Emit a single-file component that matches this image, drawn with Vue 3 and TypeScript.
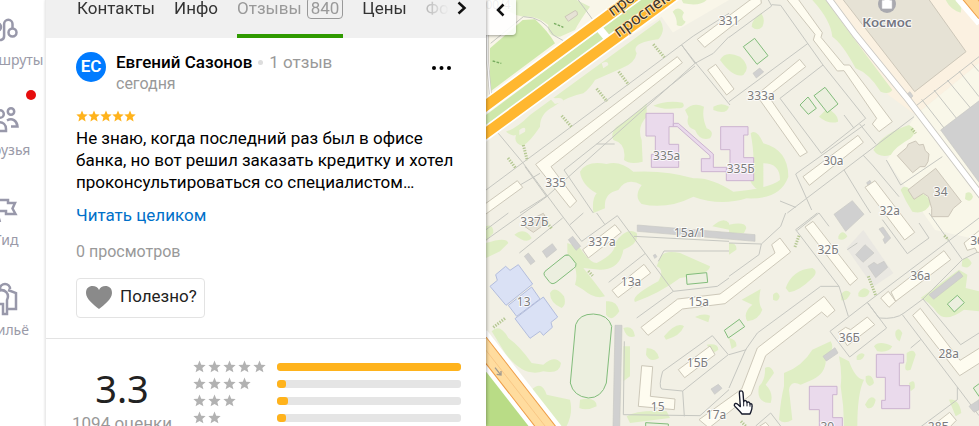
<script setup lang="ts">
interface Label { x: number; y: number; text: string }
interface Tile {
  x: number
  y: number
  greens: string
  lines: string
  hedges: string
  houses: string
  fields: string
  greys: string
}

const tabs = ['Контакты', 'Инфо', 'Отзывы', 'Цены', 'Фото']
const activeTab = 'Отзывы'
const reviewCount = 840

const ratings = [
  { stars: 5, share: 100 },
  { stars: 4, share: 5 },
  { stars: 3, share: 6 },
  { stars: 2, share: 5 },
]

const starPath = 'M6 0.5 7.6 4.3 11.7 4.6 8.6 7.3 9.6 11.4 6 9.2 2.4 11.4 3.4 7.3 0.3 4.6 4.4 4.3Z'

const tiles: Tile[] = [
  {
    x: 0,
    y: 0,
    greens: `M78 395Q110 385 150 345L540 60Q560 90 535 118Q450 128 470 160Q465 190 425 205Q380 225 345 240Q330 265 310 280Q260 290 220 320Q180 340 180 380Q150 425 128 438Q100 430 108 405Q95 410 78 395Z
      M18 0H290L330 20Q300 60 285 90L240 110Q200 110 205 75Q170 45 130 50L108 45Z
      M578 35Q595 15 612 38Q600 55 617 65Q605 85 590 75Q592 55 578 35Z
      M610 10Q660 20 680 0H605Z
      M500 310L500 350Q470 380 485 420L488 485Q450 495 432 480Q440 430 400 420Q390 400 410 380Q460 350 500 310Z
      M520 317Q560 300 608 308Q620 325 590 325Q550 330 520 317Z
      M615 330Q640 305 672 320Q665 350 680 385Q705 395 690 415Q660 425 645 390Q615 380 625 350Z
      M700 320Q725 305 747 320Q740 345 700 330Z
      M300 515Q320 480 380 492Q420 480 460 515Q560 510 640 535Q690 530 760 575Q870 565 900 540Q900 490 850 490L850 570Q820 570 810 540Q830 500 812 400Q830 385 850 430Q925 450 925 530Q900 600 800 595Q720 620 640 590Q560 630 485 612Q460 590 485 555Q440 530 415 570Q370 580 375 625L340 639Q335 595 350 580Q305 555 300 515Z
      M720 180Q735 150 780 170Q815 200 790 225Q760 235 720 180Z`,
    lines: `M18 570L640 108L747 40 M18 615L180 520 M55 400L130 490L240 639 M120 639L205 585L645 190L605 135L640 180L750 315 M645 190L700 160L747 110 M350 432H404 M340 639L252 510L645 198 M135 500L200 590L18 720 M295 0L350 75 M32 130L130 50Q190 50 220 105L255 125`,
    hedges: 'M520 133L553 172 M416 215L446 254 M350 266L381 304 M245 347L276 382 M130 435L142 482 M84 474L106 503',
    houses: `M167 493L592 170 607 188 213 500 290 603 270 623Z M-10 630L112 542 128 562 0 655Z
      M652 118L810 0 842 -10 844 10 674 142Z M683 210L707 193 762 267 740 285Z`,
    fields: '',
    greys: '',
  },
  {
    x: 747,
    y: 0,
    greens: `M250 0H290L345 75Q400 150 490 270Q480 285 455 275Q420 220 380 205Q340 130 310 110Q305 60 250 0Z
      M68 80Q70 55 97 40Q110 60 100 80Q85 95 68 80Z
      M270 350L295 325Q330 345 327 365Q300 375 270 350Z
      M433 450Q460 400 540 375Q570 390 545 415Q500 440 485 465Q450 475 433 450Z
      M515 570Q525 550 545 570Q600 580 605 610Q590 645 550 635Q530 605 515 570Z
      M710 580Q725 570 732 590Q725 610 708 597Z
      M650 0H690Q700 20 695 38Q665 30 650 0Z`,
    lines: `M0 112L128 18L118 0 M128 14L155 16L282 195L410 355L277 460L153 295L282 195 M0 305L237 130 M175 639L555 350 M200 522L408 373 M200 522L248 630 M345 345L375 385 M392 372L441 433 M345 510L400 600L425 639 M402 465L430 495L510 590 M472 480L515 555L640 470 M153 603L200 622`,
    hedges: 'M548 386L560 400',
    houses: `M170 -6L258 103 253 120 325 213 345 212 443 355 430 372 450 395 490 365 362 195 345 195 276 112 280 98 205 -6Z
      M82 285L212 178 230 200 118 288 235 457 213 470Z M222 530L387 406 403 427 241 556Z
      M408 562L438 542 557 697 527 720Z`,
    fields: 'M43 140L77 115 117 167 84 193Z M213 315L237 291 262 325 238 343Z M255 287L288 262 327 312 295 338Z',
    greys: `M72 220L92 204 104 216 82 234Z M635 390L760 295V560Z M530 285L543 275 552 288 541 299Z
      M413 548L423 541 428 552 418 558Z M315 643L370 602 405 643 350 694Z`,
  },
  {
    x: 0,
    y: 639,
    greens: `M18 90Q80 70 85 90L60 115 18 135Z M103 65Q135 40 155 75Q140 95 103 65Z M18 40Q40 30 40 60L18 85Z
      M262 90L300 105Q330 150 350 150Q410 120 405 90Q440 40 470 60Q480 90 430 110Q420 170 360 170L310 165Q350 215 375 250Q345 260 310 230L285 215Q300 170 262 120Z
      M210 240Q225 215 252 250Q260 275 245 285Q210 270 210 240Z M378 265Q410 260 418 295Q395 330 378 305Z
      M540 135Q550 110 600 120L690 160Q690 185 600 195Q540 240 465 267Q450 250 535 205Q555 170 530 160Z
      M35 355Q60 330 85 375Q120 400 155 450L190 455Q225 425 243 450Q240 485 190 475Q130 495 75 420Z
      M155 530Q185 500 200 545L270 560Q280 600 260 639H220Z M430 345Q460 335 465 370Q440 380 430 345Z
      M430 400H450V490L430 505Z M500 405Q530 405 537 435Q510 450 498 425Z
      M552 370Q590 325 612 340Q600 370 558 380Z M300 560Q350 550 350 580Q320 595 298 585Z
      M440 610Q470 590 560 595L570 615 450 630Z M645 312Q670 300 690 308L685 328Z M680 395Q715 390 715 410L700 420Z M697 40Q730 10 747 30V50Z`,
    lines: `M18 50L85 0 M118 120L248 15 M240 0L305 85L412 8 M412 8L580 235L712 220L747 195 M386 208L495 122 M462 70L747 85 M535 145L552 114H747 M580 235L470 315 M433 385L430 605L660 608L747 530 M697 368L745 425L608 534L613 610 M608 534L545 528Q535 520 548 475L697 368 M350 0L375 35 M270 35L310 0`,
    hedges: 'M40 343L75 316 M325 174L338 188 M202 30L214 46',
    houses: `M308 110L405 35 424 58 325 135Z M396 232L492 154 512 180 414 254Z
      M483 343L593 258 720 243 885 120 875 95 900 75 932 117 735 272 607 288 504 367Z
      M485 458L518 461 511 550 585 558 583 590 475 580Z M595 470L690 399 705 425 614 494Z`,
    fields: `M287 335Q298 303 340 303Q385 305 395 340L379 510Q365 555 325 555Q280 550 271 510Z
      M195 175L255 127Q268 122 275 135L288 152Q290 162 280 167L228 208Q215 217 207 205L193 187Q190 180 195 175Z
      M619 185L680 179 683 208 621 214Z M497 645V629L565 633V645Z M733 352L778 319 794 341 745 375Z`,
    greys: `M472 36L825 65V85L472 55Z M405 337H426L419 645H399Z M187 115L217 92 230 110 200 134Z
      M265 80L278 70 302 100 288 112Z M133 130L145 120 165 145 152 155Z M693 528L715 514 726 526 704 544Z M520 127L526 124 531 131 524 136Z`,
  },
  {
    x: 747,
    y: 639,
    greens: `M0 35Q50 25 52 45L45 60H0Z M0 90Q25 90 22 110L0 125Z
      M170 225Q190 170 250 165Q270 175 250 195Q210 235 180 238Z M132 245Q145 230 152 250Q148 270 132 260Z
      M38 260L95 228Q85 270 100 290Q90 320 55 325Q40 300 70 275Z M0 375Q25 380 22 400L8 408Z
      M335 245Q350 225 365 240Q355 265 337 262Z M388 240Q405 215 422 235Q415 260 388 250Z
      M328 70Q340 45 355 70Q345 85 328 78Z M500 355Q510 340 520 360L512 385Q495 375 500 355Z
      M165 480Q220 460 250 410L305 385Q320 410 290 430Q295 480 250 500L215 515Q185 500 180 530L190 620Q165 635 150 620Q155 560 165 520Z
      M330 430L360 445Q380 500 405 500Q385 540 385 639H345Q345 580 335 520Q340 480 330 430Z
      M108 465Q125 455 135 480L110 515Q135 540 125 570Q80 570 90 520Q110 500 108 465Z
      M383 430Q395 415 407 425Q400 445 383 440Z M435 400Q450 380 490 400Q480 420 445 415Z
      M533 420Q555 405 560 425L545 470Q520 480 533 445Z M540 510Q560 495 557 525L545 535Z
      M410 490Q430 480 435 510Q420 530 410 505Z M408 575Q425 540 440 560Q435 590 415 585Z
      M575 255L690 170 715 185 710 225 750 235V295L705 290Q650 330 625 300Q600 265 575 255Z
      M700 140Q715 125 728 150Q720 170 698 160Z M660 560Q690 555 697 600L680 610Z`,
    lines: `M0 90L97 93L155 40L170 0 M97 93L90 125L0 190 M200 50L265 0 M200 50L330 220L358 310 M330 220H275L85 360L50 410L0 525 M0 425L52 410 M303 355L415 268L473 345L362 432Z M415 268L450 315Q500 320 525 300L582 258L700 140L600 0 M520 305L685 522L750 608 M582 258L695 395L750 360 M685 522V560L550 660 M545 405L575 380 M205 52L270 0L300 40 M460 20L535 122L600 75L570 30 M415 268L750 15 M80 639L125 600L155 639 M700 140L750 115 M355 110L385 90`,
    hedges: 'M210 68L197 104 M418 190L440 247 M646 68L658 80 M36 625L50 639',
    houses: `M228 42L252 25 386 197 363 217Z M486 237L645 113 665 140 500 265Z M455 255L478 235 500 265 480 283Z
      M328 358L350 343 365 350 415 312 437 335 355 398Z M551 307L574 286 693 442 760 400V445L692 488Z
      M705 90L760 45V118L745 118 738 105 715 112Z M595 650L662 598 682 622 655 650Z
      M-90 620L38 528 85 405 285 250 318 292 295 312 278 297 110 428 66 545 -60 645Z M75 650L110 628 125 645Z`,
    fields: 'M655 273L685 247 706 269 676 297Z M760 505L733 525 750 550Z',
    greys: `M282 430L318 404 327 420 292 444Z M600 245L690 175 702 190 614 259Z M380 125L408 95 435 120 402 148Z
      M417 160L435 148 445 155 465 145 476 163 440 194Z M450 48L462 42 485 75 468 92 462 80 468 72Z M720 580L750 560V590L735 598Z`,
  },
]

const houseLabels: Label[] = [
  { x: 747, y: 76, text: '331' }, { x: 560, y: 480, text: '335а' }, { x: 227, y: 562, text: '335' },
  { x: 782, y: 520, text: '335Б' }, { x: 843, y: 300, text: '333а' }, { x: 1060, y: 495, text: '30а' },
  { x: 1382, y: 588, text: '34' }, { x: 1229, y: 645, text: '32а' }, { x: 163, y: 677, text: '337Б' },
  { x: 366, y: 738, text: '337а' }, { x: 629, y: 711, text: '15а/1' }, { x: 453, y: 859, text: '13а' },
  { x: 656, y: 919, text: '15а' }, { x: 131, y: 919, text: '13' }, { x: 652, y: 1101, text: '15Б' },
  { x: 533, y: 1233, text: '15' }, { x: 708, y: 1258, text: '17а' }, { x: 1044, y: 762, text: '32Б' },
  { x: 1321, y: 841, text: '36а' }, { x: 1108, y: 1027, text: '36Б' }, { x: 1406, y: 1073, text: '28а' },
  { x: 1491, y: 735, text: '36' }, { x: 1375, y: 1292, text: '28Б' }, { x: 1042, y: 1294, text: '30' },
]

function shift(tile: Tile): string {
  return `translate(${tile.x} ${tile.y})`
}
</script>

<template>
  <div class="app">
    <nav class="rail" aria-label="Разделы">
      <div class="rail-inner">
        <a class="rail-item" href="#">
          <svg class="rail-icon" viewBox="0 0 28 28" aria-hidden="true">
            <circle cx="19.500" cy="16.500" r="4" />
            <circle cx="4" cy="11" r="4" />
            <path d="M19.500 12.500V8a4.200 4.200 0 0 0-8.400 0V20a4 4 0 0 1-7.500 2V15" />
          </svg>
          <span>Маршруты</span>
        </a>
        <a class="rail-item" href="#">
          <svg class="rail-icon" viewBox="0 0 28 28" aria-hidden="true">
            <circle cx="7" cy="8" r="3.800" />
            <circle cx="18" cy="5.500" r="3.200" />
            <path d="M0 25v-2c0-9 13-9 13 0v2zM14 14.500c5-3 10 0 10.500 6H18" />
          </svg>
          <i class="dot"></i>
          <span>Друзья</span>
        </a>
        <a class="rail-item" href="#">
          <svg class="rail-icon" viewBox="0 0 28 28" aria-hidden="true">
            <path d="M1 4H15V7H22L19.500 12.500 22.500 18H13V15H3M4 16l3 10" />
          </svg>
          <span>Гид</span>
        </a>
        <a class="rail-item" href="#">
          <svg class="rail-icon" viewBox="0 0 28 28" aria-hidden="true">
            <path d="M7 3a5 5 0 0 1 10 0M5 5c7-3 12 3 9 9V28H10V18H5M15 4 23 7V23H15" />
          </svg>
          <span>Жильё</span>
        </a>
      </div>
    </nav>

    <main class="panel">
      <header class="tabs">
        <nav class="tab-list">
          <a v-for="tab in tabs" :key="tab" href="#" class="tab" :class="{ active: tab === activeTab }">
            {{ tab }}<span v-if="tab === activeTab" class="count">{{ reviewCount }}</span>
          </a>
        </nav>
        <button class="tab-next" type="button" aria-label="Вперёд">
          <svg width="10" height="14" viewBox="0 0 10 14"><path d="M1.500 1.500 7.500 7l-6 5.500" /></svg>
        </button>
      </header>

      <article class="review">
        <div class="author">
          <div class="avatar">ЕС</div>
          <div class="who">
            <div class="name-line"><b class="name">Евгений Сазонов</b><i class="sep"></i><span>1 отзыв</span></div>
            <div class="date">сегодня</div>
          </div>
          <button class="more" type="button" aria-label="Ещё">
            <svg width="20" height="6" viewBox="0 0 20 6">
              <circle cx="3" cy="3" r="2" /><circle cx="10.500" cy="3" r="2" /><circle cx="18" cy="3" r="2" />
            </svg>
          </button>
        </div>
        <div class="score">
          <svg v-for="n in 5" :key="n" viewBox="0 0 12 12"><path :d="starPath" /></svg>
        </div>
        <p class="body">
          Не знаю, когда последний раз был в офисе<br />банка, но вот решил заказать кредитку и хотел<br />проконсультироваться со специалистом…
        </p>
        <a class="read-all" href="#">Читать целиком</a>
        <div class="views">0 просмотров</div>
        <button class="useful" type="button">
          <svg width="26" height="24" viewBox="0 0 26 24">
            <path d="M13 23C8 19 0 13 0 7 0 2 3 0 6.500 0 9.500 0 12 1.500 13 4c1-2.500 3.500-4 6.500-4C23 0 26 2 26 7c0 6-8 12-13 16Z" />
          </svg>
          Полезно?
        </button>
      </article>

      <section class="summary">
        <div class="total">
          <div class="average">3.3</div>
          <div class="votes">1094 оценки</div>
        </div>
        <ul class="rows">
          <li v-for="row in ratings" :key="row.stars" class="row">
            <span class="row-stars">
              <svg v-for="n in row.stars" :key="n" viewBox="0 0 12 12"><path :d="starPath" /></svg>
            </span>
            <span class="track"><span class="fill" :style="{ width: row.share + '%' }"></span></span>
          </li>
        </ul>
      </section>
    </main>

    <section class="map">
      <svg class="map-canvas" viewBox="18 0 1479 1278" preserveAspectRatio="xMinYMin slice" role="img" aria-label="Карта">
        <rect x="0" y="0" width="1600" height="1300" fill="#f2f0e5" />
        <path d="M18 0H747L540 120 18 510Z" fill="#f9f6e9" />
        <path d="M18 390 545 50 605 135 18 570Z" fill="#f2f0e5" />
        <path d="M1047 0H1497V190L1307 345 1225 285Z" fill="#fbf1e1" />
        <path d="M1307 345 1497 190V720L1365 690 1220 480Z" fill="#f9f7e9" />
        <path d="M1100 745 1150 690 1240 820 1180 860Z" fill="#eae8e2" />

        <g class="green"><path v-for="(t, i) in tiles" :key="i" :d="t.greens" :transform="shift(t)" /></g>
        <path d="M30 275V145L128 60 165 58Q205 95 225 130Z" fill="#cfe9ab" />
        <path d="M18 345 480 0H530L18 380Z" fill="#cfe8ab" />
        <path d="M18 1110 150 1278H18Z" fill="#b9dc86" />
        <path d="M225 295Q250 290 250 305L225 312 205 290Z M365 190Q385 180 385 195L370 205Z M118 390Q140 375 135 395L118 405Z" fill="#f2f0e5" />

        <g class="line"><path v-for="(t, i) in tiles" :key="i" :d="t.lines" :transform="shift(t)" /></g>
        <path class="line" d="M1325 298 1467 480M1362 270 1497 440M1402 240 1497 355M1437 213 1497 290M1475 190 1497 215M1305 320 1497 170" />
        <path d="M22 105V180L32 290" fill="none" stroke="#c9c6c2" stroke-width="8" />
        <path d="M22 105V180L32 290" fill="none" stroke="#fff" stroke-width="4" />

        <g class="hedge"><path v-for="(t, i) in tiles" :key="i" :d="t.hedges" :transform="shift(t)" /></g>
        <path d="M222 70 250 82M38 183 64 190" fill="none" stroke="#78ad60" stroke-width="4" stroke-dasharray="8 4" />
        <g class="grey"><path v-for="(t, i) in tiles" :key="i" :d="t.greys" :transform="shift(t)" /></g>
        <g class="field"><path v-for="(t, i) in tiles" :key="i" :d="t.fields" :transform="shift(t)" /></g>

        <g class="public">
          <path d="M1087-4H1345L1458 155 1304 275Z" />
          <path d="M1252 467 1280 443 1285 432 1307 423 1317 435 1330 433 1336 452 1347 462 1344 485 1335 500 1320 500 1298 518Z" />
          <path d="M1284 570 1367 505 1444 605 1420 625 1405 650H1355L1355 625 1345 590 1330 580 1302 598Z" />
          <path d="M135 680 170 650 190 640 205 665 160 697Z M255 50 285 32Q293 32 292 45L265 64Z" />
        </g>
        <g class="house"><path v-for="(t, i) in tiles" :key="i" :d="t.houses" :transform="shift(t)" /></g>
        <g class="school">
          <path d="M498 340H580V380H567V433H596V502H514V463H526V408H498Z" />
          <path d="M580 370H595L700 462V502H740V515H664V476H690V467L592 380H580Z" />
          <path d="M722 380H804V405H791V473H821V542H739V505H750V449H722Z" />
          <path d="M1189 1063H1271V1089H1258V1157H1289V1226H1205V1201H1216V1132H1189Z" />
          <path d="M988 1159H1071V1184H1058V1253H1087V1290H1018V1229H988Z" />
        </g>
        <g class="office">
          <path d="M30 859 52 841 47 824 77 799 90 811 115 794 158 852 78 916Z" />
          <path d="M85 916 155 861 180 897 110 949Z" />
          <path d="M105 956 190 891 233 951 213 967 217 982 190 1006 180 994 150 1015Z" />
        </g>

        <g fill="none">
          <path d="M1040-12 1127 105 1287 302 1510 595" stroke="#c9c7c1" stroke-width="21" />
          <path d="M1040-12 1127 105 1287 302 1510 595" stroke="#fff" stroke-width="16" />
          <path d="M1445-15 1510 60" stroke="#fff" stroke-width="50" />
          <path d="M1460-15 1510 45" stroke="#ef9d45" stroke-width="38" />
          <path d="M1460-15 1510 45" stroke="#ffd797" stroke-width="32" />
          <path d="M-10 337 476-20M-10 420 590-20" stroke="#fff" stroke-width="41" />
          <path d="M353 80 380 112" stroke="#fff" stroke-width="22" />
          <path d="M-10 337 476-20M-10 420 590-20" stroke="#ffb72f" stroke-width="31" />
          <path d="M-10 1015 220 1310" stroke="#fff" stroke-width="78" />
          <path d="M-10 1015 220 1310" stroke="#ee9c45" stroke-width="52" />
          <path d="M-10 1015 220 1310" stroke="#ffdc9e" stroke-width="46" />
          <path d="M-10 1015 220 1310" stroke="#f5bd78" stroke-width="2" />
          <path d="M45 1103 61 1123M63 1113V1125L50 1123" stroke="#a29b90" stroke-width="4" />
        </g>

        <text class="street" transform="translate(398 50) rotate(-36)">проспект</text>
        <text class="street" transform="translate(416 113) rotate(-36)">проспект</text>
        <circle cx="1221" cy="12" r="27" fill="#a9a9af" />
        <path d="M1207 2H1235V25H1207Z M1214 2V-4H1228V2" fill="#fff" stroke="#fff" stroke-width="2" />
        <text class="place" x="1221" y="80">Космос</text>
        <text v-for="l in houseLabels" :key="l.text" class="number" :x="l.x" :y="l.y">{{ l.text }}</text>
        <text class="number" x="54" y="27">00/4</text>

        <path
          class="pointer"
          d="M778 1178C778 1171 788 1171 789 1178L791 1205C793 1200 800 1201 801 1208C804 1204 810 1206 810 1212C815 1209 817 1214 816 1220C817 1229 813 1234 810 1242H786C779 1233 769 1224 763 1217C762 1209 769 1209 773 1213L781 1220Z"
        />
        <path d="M791 1205V1219M801 1208V1219M810 1212V1220" stroke="#161a2b" stroke-width="3" />
      </svg>
      <button class="collapse" type="button" aria-label="Свернуть">
        <svg width="10" height="14" viewBox="0 0 10 14"><path d="M7.500 1.500 2 7l5.500 5.500" /></svg>
      </button>
    </section>
  </div>
</template>

<style>
body {
  margin: 0;
}
</style>

<style scoped>
.app {
  display: grid;
  grid-template-columns: 45px 441px minmax(0, 1fr);
  height: 100vh;
  overflow: hidden;
  background: #fff;
  color: #000;
  font-family: Roboto, "Noto Sans", sans-serif;
  font-size: 17px;
}
a {
  color: inherit;
  text-decoration: none;
}
button {
  border: 0;
  padding: 0;
  background: none;
  font: inherit;
  color: inherit;
}
.rail {
  display: flex;
  justify-content: flex-end;
  overflow: hidden;
}
.rail-inner {
  flex: none;
  width: 77px;
  padding-top: 16px;
  display: flex;
  flex-direction: column;
  gap: 34px;
}
.rail-item {
  position: relative;
  display: flex;
  flex-direction: column;
  align-items: center;
  gap: 6px;
  height: 56px;
  color: #9a9aa8;
  font-family: "Noto Sans", sans-serif;
  font-size: 14px;
  line-height: 20px;
}
.rail-icon {
  width: 28px;
  height: 28px;
  overflow: visible;
  fill: none;
  stroke: #9898aa;
  stroke-width: 2.5;
}
.dot {
  position: absolute;
  top: -16px;
  right: 9px;
  width: 10px;
  height: 10px;
  border-radius: 50%;
  background: #e60d0d;
}
.panel {
  position: relative;
  z-index: 1;
  border-left: 1px solid #ebebeb;
  box-sizing: border-box;
  overflow: hidden;
  background: #fff;
  box-shadow: 1px 0 3px rgba(0, 0, 0, 0.3);
}
.tabs {
  display: flex;
  height: 38px;
  padding: 0 19px 0 31px;
  background: #f0f0f0;
}
.tab-list {
  flex: 1;
  display: flex;
  gap: 19px;
  overflow: hidden;
  mask-image: linear-gradient(to right, #000 350px, transparent 372px);
}
.tab {
  flex: none;
  box-sizing: border-box;
  line-height: 16px;
  color: #333;
}
.tab.active {
  color: #999;
  border-bottom: 4px solid #2f9a00;
}
.tab:last-child {
  color: #bbb;
}
.count {
  margin-left: 5px;
  padding: 0 3px;
  border: 1px solid #999;
  border-radius: 4px;
}
.tab-next {
  width: 10px;
  height: 16px;
  display: flex;
  align-items: center;
}
.tab-next path,
.collapse path {
  fill: none;
  stroke: #111;
  stroke-width: 2.5;
}
.review {
  padding: 13px 30px 20px;
  border-bottom: 1px solid #e3e3e3;
}
.author {
  display: flex;
  align-items: flex-start;
}
.avatar {
  width: 30px;
  height: 30px;
  margin-top: 1px;
  margin-right: 10px;
  border-radius: 50%;
  background: #007bff;
  color: #fff;
  font-size: 17px;
  font-weight: 600;
  line-height: 29px;
  text-align: center;
}
.name-line {
  display: flex;
  align-items: center;
  color: #999;
  line-height: 22px;
}
.name {
  color: #000;
  font-weight: 500;
}
.sep {
  width: 5px;
  height: 5px;
  margin: 0 6px;
  border-radius: 50%;
  background: #ddd;
}
.date {
  color: #999;
  font-size: 16px;
  line-height: 22px;
}
.more {
  display: flex;
  margin-left: auto;
  margin-top: 14px;
  margin-right: 5px;
}
.score {
  display: flex;
  margin-top: 15px;
}
.score svg {
  width: 12px;
  height: 12px;
  fill: #ffb31c;
}
.body {
  margin: 5px 0 0;
  line-height: 22px;
  white-space: nowrap;
}
.read-all {
  display: block;
  margin-top: 11px;
  color: #0070c9;
  line-height: 22px;
}
.views {
  margin-top: 15px;
  color: #999;
  font-size: 16px;
  line-height: 22px;
}
.useful {
  display: flex;
  align-items: center;
  gap: 8px;
  height: 40px;
  margin-top: 15px;
  padding: 0 7px 4px 9px;
  border: 1px solid #e3e3e3;
  border-radius: 4px;
  color: #222;
}
.useful svg {
  margin-top: 4px;
  fill: #8a8a8a;
}
.summary {
  display: flex;
  gap: 20px;
  padding: 19px 25px 0 25px;
}
.total {
  width: 102px;
  text-align: center;
}
.average {
  margin-top: 3px;
  color: #222;
  font-family: "Noto Sans", sans-serif;
  font-size: 38px;
  line-height: 54px;
}
.votes {
  color: #999;
  line-height: 16px;
  white-space: nowrap;
}
.rows {
  flex: 1;
  margin: 0;
  padding: 0;
  list-style: none;
}
.row {
  display: flex;
  align-items: center;
  height: 17px;
}
.row-stars {
  display: flex;
  gap: 2px;
  width: 84px;
}
.row-stars svg {
  width: 13px;
  height: 13px;
  fill: #b2b2b2;
}
.track {
  flex: 1;
  height: 8px;
  border-radius: 3px;
  background: #e5e5e5;
  overflow: hidden;
}
.fill {
  display: block;
  height: 8px;
  border-radius: 3px;
  background: #ffb31c;
}
.map {
  position: relative;
  overflow: hidden;
}
.map-canvas {
  display: block;
  width: 100%;
  height: 100%;
}
.collapse {
  position: absolute;
  top: 0;
  left: 0;
  width: 30px;
  height: 35px;
  display: flex;
  justify-content: center;
  align-items: flex-start;
  padding-top: 3px;
  border-radius: 0 0 4px;
  background: rgba(255, 255, 255, 0.88);
  box-shadow: 0 1px 3px rgba(0, 0, 0, 0.35);
}
.green {
  fill: #dfeec4;
}
.line {
  fill: none;
  stroke: #c6c7c1;
  stroke-width: 3;
}
.hedge {
  fill: none;
  stroke: #b5c893;
  stroke-width: 9;
  stroke-dasharray: 4 4;
}
.grey {
  fill: #d0d0d0;
  stroke: #c8c8c4;
  stroke-width: 2;
}
.field {
  fill: #ecefdf;
  stroke: #82bd7b;
  stroke-width: 3;
}
.public {
  fill: #e6e2d5;
  stroke: #cdc7b9;
  stroke-width: 3;
}
.house {
  fill: #fefcf0;
  stroke: #cdc8b9;
  stroke-width: 3;
  stroke-linejoin: round;
}
.school {
  fill: #eadaec;
  stroke: #ccb4d0;
  stroke-width: 3;
}
.office {
  fill: #dae1f5;
  stroke: #b3bddd;
  stroke-width: 3;
}
.number,
.place,
.street {
  font-family: "Noto Sans", "Open Sans", sans-serif;
  paint-order: stroke;
  stroke: rgba(255, 255, 255, 0.85);
  stroke-width: 6;
}
.number {
  fill: #7c7c7c;
  font-size: 36px;
  text-anchor: middle;
}
.place {
  fill: #757783;
  font-size: 40px;
  font-weight: 600;
  text-anchor: middle;
}
.street {
  fill: #3c3428;
  stroke: #ffe2ae;
  font-size: 48px;
}
.pointer {
  fill: #fff;
  stroke: #161a2b;
  stroke-width: 4;
  stroke-linejoin: round;
}
</style>
